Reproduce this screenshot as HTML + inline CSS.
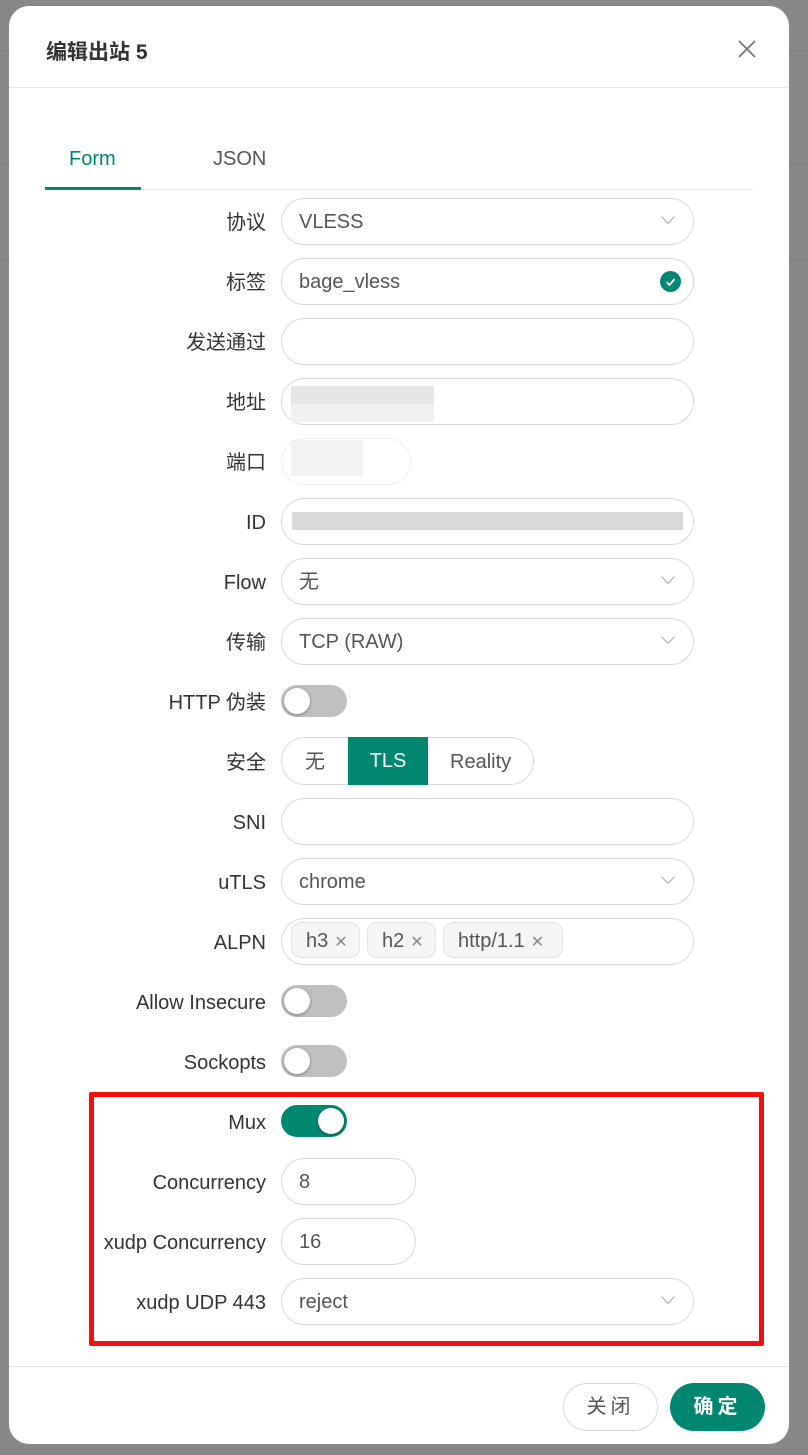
<!DOCTYPE html>
<html><head><meta charset="utf-8"><style>
*{box-sizing:border-box;margin:0;padding:0}
body{width:808px;height:1455px;background:#888;position:relative;overflow:hidden;font-family:"Liberation Sans","Noto Sans CJK SC",sans-serif;color:#333}
.bgl{position:absolute;left:0;width:808px;height:1px;background:#7d7d7d}
.modal{position:absolute;left:9px;top:6px;width:780px;height:1438px;background:#fff;border-radius:20px}
.a{position:absolute}
.lbl{position:absolute;right:542px;font-size:20px;color:#333;white-space:nowrap;line-height:24px}
.inp{position:absolute;left:281px;width:413px;height:47px;border:1px solid #d9d9d9;border-radius:24px;font-size:20px;color:#555;padding-left:17px;line-height:47px}
.chev{position:absolute;right:18px;top:17px;width:14px;height:8px}
.sw{position:absolute;left:281px;width:66px;height:32px;border-radius:16px;background:#bfbfbf}
.sw i{position:absolute;left:3px;top:3px;width:26px;height:26px;border-radius:50%;background:#fff;box-shadow:0 1px 3px rgba(0,0,0,.35)}
.sw.on{background:#008771}.sw.on i{left:37px}
.tag{position:absolute;top:922px;height:36px;border:1px solid #e3e3e3;background:#f5f5f5;border-radius:10px;font-size:20px;color:#555;line-height:36px;padding-left:14px}
.tag span{color:#888;font-size:16px;margin-left:6px}
.blur{position:absolute}
</style></head><body>
<div class="bgl" style="top:50px"></div><div class="bgl" style="top:163px"></div><div class="bgl" style="top:260px"></div>
<div class="modal"></div>
<div class="a" style="left:46px;top:36px;font-size:21px;font-weight:bold;color:#333">编辑出站 5</div>
<svg class="a" style="left:738px;top:40px" width="18" height="18"><path d="M1 1L17 17M17 1L1 17" stroke="#777" stroke-width="1.8"/></svg>
<div class="a" style="left:9px;top:87px;width:780px;height:1px;background:#e8e8e8"></div>
<div class="a" style="left:69px;top:148px;font-size:20px;color:#008771">Form</div>
<div class="a" style="left:213px;top:148px;font-size:20px;color:#555">JSON</div>
<div class="a" style="left:45px;top:189px;width:708px;height:1px;background:#e5e5e5"></div>
<div class="a" style="left:45px;top:187px;width:96px;height:3px;background:#008771"></div>

<div class="lbl" style="top:211px">协议</div><div class="inp" style="top:198px">VLESS<svg class="chev"><path d="M0.5 0.5L7 7.5L13.5 0.5" stroke="#bbb" stroke-width="1.3" fill="none"/></svg></div>
<div class="lbl" style="top:271px">标签</div><div class="inp" style="top:258px">bage_vless<svg class="a" style="right:12px;top:12px" width="21" height="21"><circle cx="10.5" cy="10.5" r="10.5" fill="#008771"/><path d="M6.5 11l3 3 5-6" stroke="#fff" stroke-width="1.8" fill="none"/></svg></div>
<div class="lbl" style="top:331px">发送通过</div><div class="inp" style="top:318px"></div>
<div class="lbl" style="top:391px">地址</div><div class="inp" style="top:378px"></div>
<div class="blur" style="left:291px;top:386px;width:143px;height:36px;background:#f0f0f0"></div>
<div class="blur" style="left:291px;top:386px;width:143px;height:18px;background:#e6e6e6"></div>
<div class="lbl" style="top:451px">端口</div><div class="inp" style="top:438px;width:130px;border-color:#eee"></div>
<div class="blur" style="left:291px;top:440px;width:72px;height:36px;background:#f1f1f1"></div>
<div class="lbl" style="top:511px">ID</div><div class="inp" style="top:498px"></div>
<div class="blur" style="left:292px;top:512px;width:391px;height:18px;background:#d9d9d9"></div>
<div class="lbl" style="top:571px">Flow</div><div class="inp" style="top:558px">无<svg class="chev"><path d="M0.5 0.5L7 7.5L13.5 0.5" stroke="#bbb" stroke-width="1.3" fill="none"/></svg></div>
<div class="lbl" style="top:631px">传输</div><div class="inp" style="top:618px">TCP (RAW)<svg class="chev"><path d="M0.5 0.5L7 7.5L13.5 0.5" stroke="#bbb" stroke-width="1.3" fill="none"/></svg></div>
<div class="lbl" style="top:691px">HTTP 伪装</div><div class="sw" style="top:685px"><i></i></div>
<div class="lbl" style="top:751px">安全</div>
<div class="a" style="left:281px;top:737px;width:253px;height:48px;border:1px solid #d9d9d9;border-radius:24px;font-size:20px;color:#555;line-height:48px">
<span class="a" style="left:23px;top:0">无</span>
<span class="a" style="left:66px;top:-1px;width:80px;height:48px;background:#008771;color:#fff;text-align:center">TLS</span>
<span class="a" style="left:168px;top:0">Reality</span></div>
<div class="lbl" style="top:811px">SNI</div><div class="inp" style="top:798px"></div>
<div class="lbl" style="top:871px">uTLS</div><div class="inp" style="top:858px">chrome<svg class="chev"><path d="M0.5 0.5L7 7.5L13.5 0.5" stroke="#bbb" stroke-width="1.3" fill="none"/></svg></div>
<div class="lbl" style="top:931px">ALPN</div><div class="inp" style="top:918px"></div>
<div class="tag" style="left:291px;width:69px">h3<span>✕</span></div>
<div class="tag" style="left:367px;width:69px">h2<span>✕</span></div>
<div class="tag" style="left:443px;width:120px">http/1.1<span>✕</span></div>
<div class="lbl" style="top:991px">Allow Insecure</div><div class="sw" style="top:985px"><i></i></div>
<div class="lbl" style="top:1051px">Sockopts</div><div class="sw" style="top:1045px"><i></i></div>
<div class="lbl" style="top:1111px">Mux</div><div class="sw on" style="top:1105px"><i></i></div>
<div class="lbl" style="top:1171px">Concurrency</div><div class="inp" style="top:1158px;width:135px">8</div>
<div class="lbl" style="top:1231px">xudp Concurrency</div><div class="inp" style="top:1218px;width:135px">16</div>
<div class="lbl" style="top:1291px">xudp UDP 443</div><div class="inp" style="top:1278px">reject<svg class="chev"><path d="M0.5 0.5L7 7.5L13.5 0.5" stroke="#bbb" stroke-width="1.3" fill="none"/></svg></div>
<div class="a" style="left:89px;top:1092px;width:675px;height:254px;border:5px solid #f01010;border-radius:2px"></div>
<div class="a" style="left:9px;top:1366px;width:780px;height:1px;background:#e8e8e8"></div>
<div class="a" style="left:563px;top:1383px;width:95px;height:48px;border:1px solid #d9d9d9;border-radius:24px;text-align:center;line-height:46px;font-size:20px;color:#555;letter-spacing:4px">关闭</div>
<div class="a" style="left:670px;top:1383px;width:95px;height:48px;background:#008771;border-radius:24px;text-align:center;line-height:48px;font-size:20px;color:#fff;font-weight:bold;letter-spacing:4px">确定</div>
</body></html>
